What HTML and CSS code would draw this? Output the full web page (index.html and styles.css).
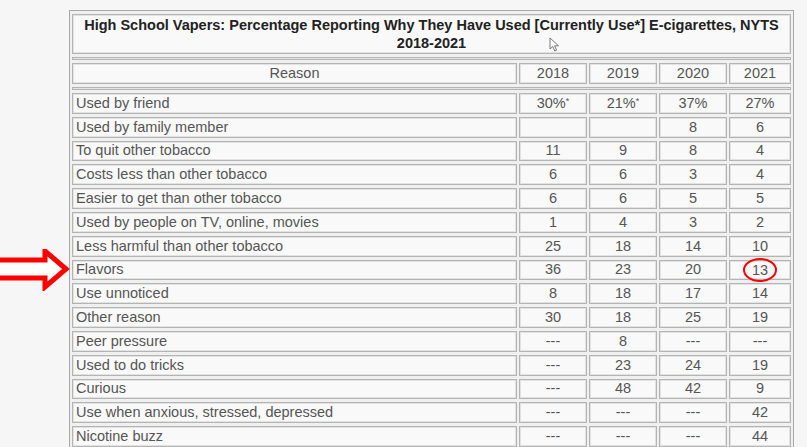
FILE: index.html
```html
<!DOCTYPE html>
<html>
<head>
<meta charset="utf-8">
<link rel="stylesheet" href="styles.css">
</head>
<body>
<div class="page">
  <table class="vt">
    <tr><td class="title" colspan="5">High School Vapers: Percentage Reporting Why They Have Used [Currently Use*] E-cigarettes, NYTS<br>2018-2021</td></tr>
    <tr class="spacer"><td colspan="5"></td></tr>
    <tr class="head"><td class="reason">Reason</td><td class="y">2018</td><td class="y">2019</td><td class="y">2020</td><td class="y y4">2021</td></tr>
    <tr class="spacer"><td colspan="5"></td></tr>
    <tr><td>Used by friend</td><td class="n">30%<sup>*</sup></td><td class="n">21%<sup>*</sup></td><td class="n">37%</td><td class="n">27%</td></tr>
    <tr><td>Used by family member</td><td class="n"></td><td class="n"></td><td class="n">8</td><td class="n">6</td></tr>
    <tr><td>To quit other tobacco</td><td class="n">11</td><td class="n">9</td><td class="n">8</td><td class="n">4</td></tr>
    <tr><td>Costs less than other tobacco</td><td class="n">6</td><td class="n">6</td><td class="n">3</td><td class="n">4</td></tr>
    <tr><td>Easier to get than other tobacco</td><td class="n">6</td><td class="n">6</td><td class="n">5</td><td class="n">5</td></tr>
    <tr><td>Used by people on TV, online, movies</td><td class="n">1</td><td class="n">4</td><td class="n">3</td><td class="n">2</td></tr>
    <tr><td>Less harmful than other tobacco</td><td class="n">25</td><td class="n">18</td><td class="n">14</td><td class="n">10</td></tr>
    <tr><td>Flavors</td><td class="n">36</td><td class="n">23</td><td class="n">20</td><td class="n"><span class="circled">13</span></td></tr>
    <tr><td>Use unnoticed</td><td class="n">8</td><td class="n">18</td><td class="n">17</td><td class="n">14</td></tr>
    <tr><td>Other reason</td><td class="n">30</td><td class="n">18</td><td class="n">25</td><td class="n">19</td></tr>
    <tr><td>Peer pressure</td><td class="n">---</td><td class="n">8</td><td class="n">---</td><td class="n">---</td></tr>
    <tr><td>Used to do tricks</td><td class="n">---</td><td class="n">23</td><td class="n">24</td><td class="n">19</td></tr>
    <tr><td>Curious</td><td class="n">---</td><td class="n">48</td><td class="n">42</td><td class="n">9</td></tr>
    <tr><td>Use when anxious, stressed, depressed</td><td class="n">---</td><td class="n">---</td><td class="n">---</td><td class="n">42</td></tr>
    <tr><td>Nicotine buzz</td><td class="n">---</td><td class="n">---</td><td class="n">---</td><td class="n">44</td></tr>
  </table>
  <svg class="arrow" width="70" height="42" viewBox="0 0 70 42">
    <path d="M-4 11 H45 V2 L66 20 L45 38 V29 H-4 Z" fill="#fff" stroke="#ff0000" stroke-width="5" stroke-linejoin="miter"/>
  </svg>
  <svg class="cursor" width="12" height="16" viewBox="0 0 12 16">
    <path d="M1 1 V12 L3.8 9.5 L5.8 14 L7.6 13.2 L5.6 8.8 H9.5 Z" fill="#fff" stroke="#777" stroke-width="1"/>
  </svg>
</div>
</body>
</html>
```

FILE: styles.css
```css
html, body {
  margin: 0;
  padding: 0;
  background: #f6f6f6;
}
.page {
  position: relative;
  width: 807px;
  height: 447px;
  overflow: hidden;
  padding: 10px 0 0 69px;
  box-sizing: border-box;
}
.vt {
  width: 725px;
  border: 1px solid #a8a8a8;
  border-collapse: separate;
  border-spacing: 2px 3px;
  background: #f0f0f0;
  font-family: "Liberation Sans", Arial, sans-serif;
  font-size: 14.5px;
  color: #555;
}
.vt td {
  border: 1px solid #b4b4b4;
  box-shadow: inset 0 0 0 1px #e2e2e2;
  background: #f9f9f9;
  height: 18.8px;
  padding: 0 3px;
  line-height: 17px;
  white-space: nowrap;
}
.vt td.title {
  height: 37px;
  text-align: center;
  font-weight: bold;
  color: #222;
  line-height: 18px;
  padding: 0 6px 1px;
}
.vt tr.spacer td {
  height: 1px;
  padding: 0;
  line-height: 0;
  font-size: 0;
  box-shadow: none;
  background: #e4e4e4;
}
.vt tr.head td {
  text-align: center;
  height: 19px;
}
.vt td.reason { width: auto; }
.vt td.y { width: 60px; }
.vt td.y4 { width: 54px; }
.vt td.n { text-align: center; }
.vt sup {
  font-size: 9px;
  line-height: 0;
  vertical-align: 4px;
}
.circled {
  display: inline-block;
  vertical-align: middle;
  border: 2px solid #ff0000;
  border-radius: 50%;
  width: 34px;
  height: 24px;
  line-height: 20px;
  margin: -4px 0 -3px;
  box-sizing: border-box;
}
.arrow {
  position: absolute;
  left: 0;
  top: 249px;
}
.cursor {
  position: absolute;
  left: 549px;
  top: 37px;
}
```
